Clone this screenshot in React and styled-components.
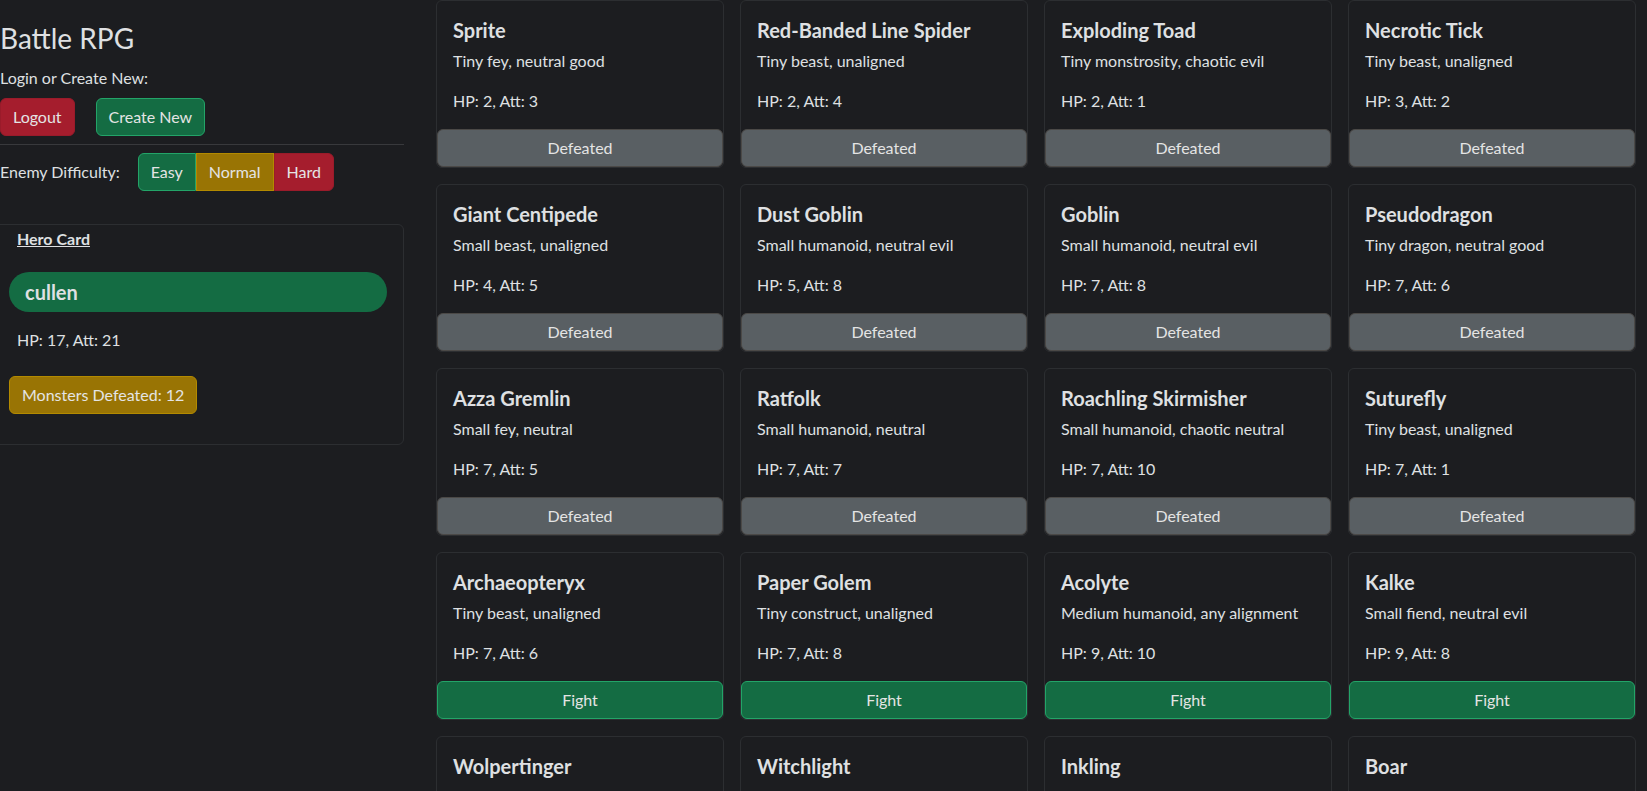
import React from 'react';
import styled, { createGlobalStyle } from 'styled-components';

const GlobalStyle = createGlobalStyle`
  body {
    margin: 0;
    background-color: #1c1d20;
    color: #dfe0e2;
    font-family: Lato, "Noto Sans", sans-serif;
    font-size: 16px;
    line-height: 1.5;
  }
`;

const Page = styled.div`
  display: grid;
  grid-template-columns: 404px 1fr;
  column-gap: 32px;
  padding-right: 11px;
`;

const Sidebar = styled.aside`
  display: flex;
  flex-direction: column;
`;

const AppTitle = styled.h3`
  margin: 22px 0 10px;
  font-size: 28px;
  font-weight: 400;
  line-height: 1.2;
`;

const Label = styled.div`
  font-size: 16px;
`;

const ButtonRow = styled.div`
  display: flex;
  gap: 21px;
  margin-top: 8px;
`;

const variants = {
  danger: { bg: '#a51d2d', border: '#9a1b2a' },
  success: { bg: '#146c43', border: '#23a468' },
  warning: { bg: '#997404', border: '#b38a00' },
  secondary: { bg: '#595f63', border: '#4b4947' },
};

const Button = styled.button`
  font-family: inherit;
  font-size: 16px;
  line-height: 24px;
  padding: 6px 12px;
  border-radius: 6px;
  border: 1px solid ${p => variants[p.$variant].border};
  background-color: ${p => variants[p.$variant].bg};
  color: #e4e4e4;
  cursor: pointer;
`;

const Divider = styled.hr`
  margin: 8px 0;
  border: 0;
  border-top: 1px solid #38393c;
`;

const DifficultyRow = styled.div`
  display: flex;
  align-items: center;
  gap: 18px;
`;

const ButtonGroup = styled.div`
  display: flex;
`;

const GroupButton = styled(Button)`
  border-radius: 0;
  &:first-child {
    border-radius: 6px 0 0 6px;
  }
  &:last-child {
    border-radius: 0 6px 6px 0;
  }
`;

const HeroCard = styled.section`
  margin: 33px 0 0 -8px;
  border: 1px solid #2c2e31;
  border-radius: 6px;
  padding: 2px 16px 30px;
  display: flex;
  flex-direction: column;
  align-items: flex-start;
`;

const HeroHeading = styled.div`
  margin-left: 8px;
  font-weight: 700;
  text-decoration: underline;
`;

const HeroName = styled.div`
  align-self: stretch;
  margin-top: 21px;
  height: 40px;
  display: flex;
  align-items: center;
  padding: 0 16px;
  border-radius: 20px;
  background-color: #146c43;
  font-size: 20px;
  font-weight: 700;
`;

const HeroStats = styled.div`
  margin: 16px 0 24px 8px;
`;

const CardGrid = styled.main`
  display: grid;
  grid-template-columns: repeat(4, 1fr);
  gap: 16px;
  align-content: start;
`;

const Card = styled.div`
  display: flex;
  flex-direction: column;
  border: 1px solid #2c2e31;
  border-radius: 6px;
  background-color: #1c1d20;
`;

const CardBody = styled.div`
  padding: 16px;
`;

const CardTitle = styled.h5`
  margin: 1px 0 7px;
  font-size: 20px;
  font-weight: 700;
  line-height: 1.2;
`;

const CardText = styled.p`
  margin: 0 0 16px;
  white-space: nowrap;
  &:last-child {
    margin-bottom: 0;
  }
`;

const monsters = [
  ['Sprite', 'Tiny fey, neutral good', 2, 3, true],
  ['Red-Banded Line Spider', 'Tiny beast, unaligned', 2, 4, true],
  ['Exploding Toad', 'Tiny monstrosity, chaotic evil', 2, 1, true],
  ['Necrotic Tick', 'Tiny beast, unaligned', 3, 2, true],
  ['Giant Centipede', 'Small beast, unaligned', 4, 5, true],
  ['Dust Goblin', 'Small humanoid, neutral evil', 5, 8, true],
  ['Goblin', 'Small humanoid, neutral evil', 7, 8, true],
  ['Pseudodragon', 'Tiny dragon, neutral good', 7, 6, true],
  ['Azza Gremlin', 'Small fey, neutral', 7, 5, true],
  ['Ratfolk', 'Small humanoid, neutral', 7, 7, true],
  ['Roachling Skirmisher', 'Small humanoid, chaotic neutral', 7, 10, true],
  ['Suturefly', 'Tiny beast, unaligned', 7, 1, true],
  ['Archaeopteryx', 'Tiny beast, unaligned', 7, 6, false],
  ['Paper Golem', 'Tiny construct, unaligned', 7, 8, false],
  ['Acolyte', 'Medium humanoid, any alignment', 9, 10, false],
  ['Kalke', 'Small fiend, neutral evil', 9, 8, false],
  ['Wolpertinger', 'Small monstrosity, unaligned', 9, 7, false],
  ['Witchlight', 'Tiny construct, unaligned', 10, 4, false],
  ['Inkling', 'Tiny construct, unaligned', 10, 6, false],
  ['Boar', 'Medium beast, unaligned', 11, 9, false],
];

const MonsterCard = ({ name, type, hp, att, defeated }) => (
  <Card>
    <CardBody>
      <CardTitle>{name}</CardTitle>
      <CardText>{type}</CardText>
      <CardText>HP: {hp}, Att: {att}</CardText>
    </CardBody>
    <Button $variant={defeated ? 'secondary' : 'success'}>
      {defeated ? 'Defeated' : 'Fight'}
    </Button>
  </Card>
);

const App = () => (
  <>
    <GlobalStyle />
    <Page>
      <Sidebar>
        <AppTitle>Battle RPG</AppTitle>
        <Label>Login or Create New:</Label>
        <ButtonRow>
          <Button $variant="danger">Logout</Button>
          <Button $variant="success">Create New</Button>
        </ButtonRow>
        <Divider />
        <DifficultyRow>
          <Label>Enemy Difficulty:</Label>
          <ButtonGroup>
            <GroupButton $variant="success">Easy</GroupButton>
            <GroupButton $variant="warning">Normal</GroupButton>
            <GroupButton $variant="danger">Hard</GroupButton>
          </ButtonGroup>
        </DifficultyRow>
        <HeroCard>
          <HeroHeading>Hero Card</HeroHeading>
          <HeroName>cullen</HeroName>
          <HeroStats>HP: 17, Att: 21</HeroStats>
          <Button $variant="warning">Monsters Defeated: 12</Button>
        </HeroCard>
      </Sidebar>
      <CardGrid>
        {monsters.map(([name, type, hp, att, defeated]) => (
          <MonsterCard key={name} name={name} type={type} hp={hp} att={att} defeated={defeated} />
        ))}
      </CardGrid>
    </Page>
  </>
);

export default App;
